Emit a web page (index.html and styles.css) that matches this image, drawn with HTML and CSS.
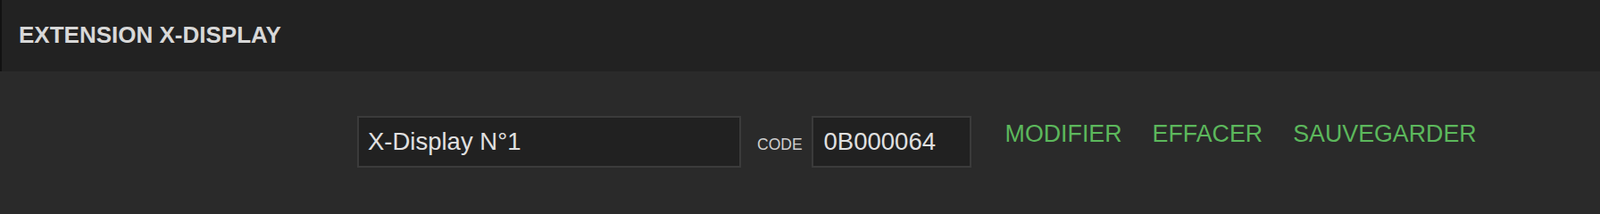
FILE: index.html
```html
<!DOCTYPE html>
<html lang="fr">
<head>
<meta charset="utf-8">
<title>Extension X-Display</title>
<link rel="stylesheet" href="styles.css">
</head>
<body>
<header class="panel-header">
  <h1 class="panel-title">EXTENSION X-DISPLAY</h1>
</header>
<main class="panel-body">
  <div class="fields">
    <input class="field field-name" type="text" value="X-Display N°1">
    <label class="field-label" for="code">CODE</label>
    <input class="field field-code" id="code" type="text" value="0B000064">
  </div>
  <div class="actions">
    <button class="action" type="button">MODIFIER</button>
    <button class="action" type="button">EFFACER</button>
    <button class="action" type="button">SAUVEGARDER</button>
  </div>
</main>
</body>
</html>
```

FILE: styles.css
```css
* {
  box-sizing: border-box;
}

html, body {
  margin: 0;
  padding: 0;
  height: 200px;
  overflow: hidden;
}

body {
  background: #2a2a2a;
  font-family: "Liberation Sans", Arial, Helvetica, sans-serif;
  color: #dcdcdc;
}

.panel-header {
  height: 80px;
  background: #222222;
  border-left: 2px solid #121212;
  padding: 0 0 2px 19px;
  display: flex;
  align-items: center;
}

.panel-title {
  margin: 0;
  font-size: 26px;
  font-weight: bold;
  color: #d8d8d8;
}

.panel-body {
  display: flex;
  align-items: flex-start;
  padding: 50px 0 0 400px;
}

.fields {
  display: flex;
  align-items: baseline;
}

.field {
  height: 58px;
  background: #212121;
  border: 2px solid #3b3b3b;
  color: #e0e0e0;
  font-family: "Liberation Sans", Arial, Helvetica, sans-serif;
  font-size: 27.5px;
  padding: 0 10px;
  outline: none;
  border-radius: 0;
}

.field-name {
  width: 430px;
}

.field-code {
  width: 179px;
  padding-left: 12px;
}

.field-label {
  font-size: 17.5px;
  color: #cfcfcf;
  margin: 0 10px 0 18px;
}

.actions {
  display: flex;
  gap: 34px;
  margin: 5px 0 0 38px;
}

.action {
  background: none;
  border: none;
  padding: 0;
  margin: 0;
  font-family: "Liberation Sans", Arial, Helvetica, sans-serif;
  font-size: 26.8px;
  color: #5cb85c;
  cursor: pointer;
  line-height: normal;
}
```
